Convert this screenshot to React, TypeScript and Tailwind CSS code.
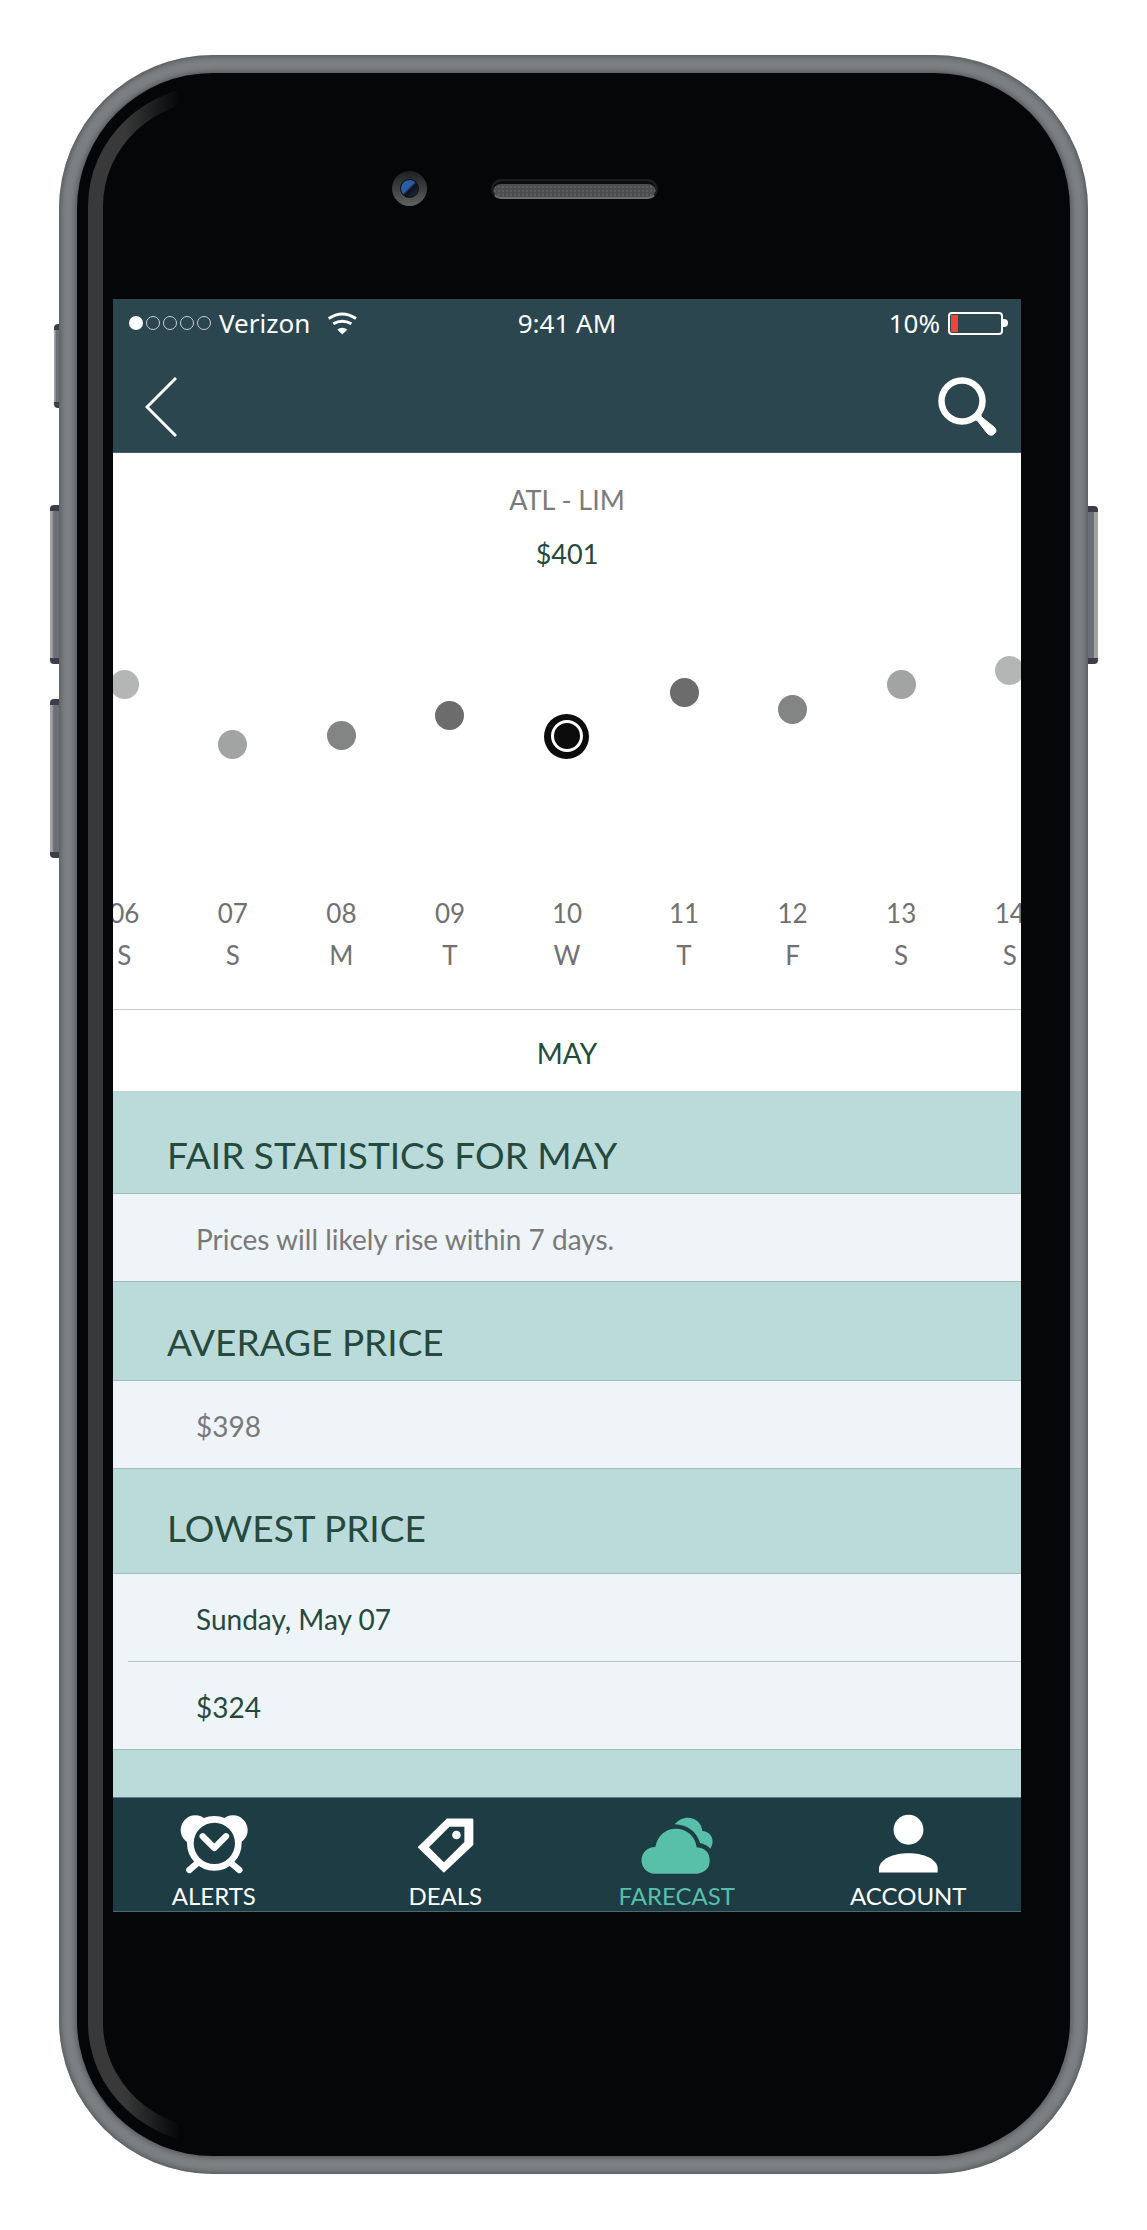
import type { ReactNode } from "react";

type Day = { date: string; day: string; top: number; tone: string };

const days: Day[] = [
  { date: "06", day: "S", top: 78, tone: "bg-[#b4b6b5]" },
  { date: "07", day: "S", top: 138, tone: "bg-[#a2a4a3]" },
  { date: "08", day: "M", top: 129, tone: "bg-[#838584]" },
  { date: "09", day: "T", top: 109, tone: "bg-[#6c6c6c]" },
  { date: "10", day: "W", top: 130, tone: "" },
  { date: "11", day: "T", top: 86, tone: "bg-[#6c6c6c]" },
  { date: "12", day: "F", top: 103, tone: "bg-[#838584]" },
  { date: "13", day: "S", top: 78, tone: "bg-[#a2a4a3]" },
  { date: "14", day: "S", top: 64, tone: "bg-[#b4b6b5]" },
];

function SideButton({ className, right = false }: { className: string; right?: boolean }) {
  return (
    <div
      className={`absolute border-y-[6px] border-y-[#3b3d49] ${
        right
          ? "rounded-r-[4px] bg-linear-to-l from-[#a3a1a1] from-35% to-[#6d6f78] to-40%"
          : "rounded-l-[4px] bg-linear-to-r from-[#a3a1a5] from-25% to-[#6d6f78] to-40%"
      } ${className}`}
    />
  );
}

function WifiIcon() {
  return (
    <svg viewBox="684 64 88 68" className="h-[23px] w-[29px]" fill="none" stroke="#fff" strokeWidth="9" aria-hidden="true">
      <path d="M686 83Q727 55 769 83" />
      <path d="M700 99Q727 83 755 99" />
      <path d="M712 116Q727 106 743 116L727 131Z" fill="#fff" stroke="none" />
    </svg>
  );
}

function StatusBar() {
  return (
    <div className="grid h-12 grid-cols-3 items-center pr-4 pl-4 font-['Noto_Sans','Open_Sans',sans-serif] text-[26px] leading-none text-white">
      <div className="flex items-center">
        <div className="flex gap-[3px]">
          <span className="size-[14px] rounded-full bg-white" />
          {[1, 2, 3, 4].map((n) => (
            <span key={n} className="size-[14px] rounded-full border border-[#c5d0d3]" />
          ))}
        </div>
        <span className="ml-2">Verizon</span>
        <span className="ml-[18px]">
          <WifiIcon />
        </span>
      </div>
      <span className="text-center whitespace-nowrap">9:41 AM</span>
      <div className="-mr-[3px] flex items-center justify-end">
        <span>10%</span>
        <div className="ml-2 h-[23px] w-[55px] rounded-[4px] border-2 border-white p-px">
          <div className="h-full w-[7px] bg-[#f0443a]" />
        </div>
        <div className="h-2 w-[5px] rounded-r-full bg-white" />
      </div>
    </div>
  );
}

function TitleBar() {
  return (
    <div className="flex h-[106px] items-end justify-between border-b border-[#3f5f6b] pr-[24px] pb-[15px] pl-[32px]">
      <button type="button" aria-label="Back">
        <svg viewBox="0 0 32 60" className="h-[60px] w-8" fill="none" stroke="#fff" strokeWidth="3" aria-hidden="true">
          <path d="M31 1L2 30L31 59" />
        </svg>
      </button>
      <button type="button" aria-label="Search">
        <svg viewBox="0 0 60 60" className="size-[60px]" aria-hidden="true">
          <circle cx="25" cy="24" r="20.500" fill="none" stroke="#fff" strokeWidth="6.500" />
          <path
            d="M37 42L43 36Q44 40 47 42L57 50Q61 54 57 57Q54 60 50 56L43 47Q41 43 37 42Z"
            fill="#fff"
            stroke="#fff"
            strokeWidth="1"
          />
        </svg>
      </button>
    </div>
  );
}

function FareChart() {
  return (
    <div className="overflow-hidden">
      <div className="-mx-[43px] grid grid-cols-[repeat(4,109fr)_126fr_repeat(4,109fr)]">
        {days.map((d) => (
          <button
            key={d.date}
            type="button"
            className="flex flex-col items-center text-[26px] leading-[42px] text-[#717171]"
          >
            <span className="relative block h-[300px] w-full">
              <span
                className="absolute left-1/2 flex size-[46px] -translate-x-1/2 -translate-y-1/2 items-center justify-center"
                style={{ top: d.top + 14 }}
              >
                {d.tone ? (
                  <span className={`size-[29px] rounded-full ${d.tone}`} />
                ) : (
                  <span className="flex size-[45px] items-center justify-center rounded-full bg-[#0c0c0c]">
                    <span className="size-8 rounded-full border-3 border-white" />
                  </span>
                )}
              </span>
            </span>
            <span>{d.date}</span>
            <span>{d.day}</span>
          </button>
        ))}
      </div>
    </div>
  );
}

function SectionTitle({ className, children }: { className: string; children: ReactNode }) {
  return (
    <h2
      className={`flex items-end border-b border-[#9fbcba] bg-[#bbdbda] pl-[54px] text-[37px] leading-[44px] text-[#26493e] ${className}`}
    >
      {children}
    </h2>
  );
}

function Row({ muted = false, last = true, children }: { muted?: boolean; last?: boolean; children: ReactNode }) {
  return (
    <div className="bg-[#eef4f7]">
      <p
        className={`flex h-[88px] items-center border-b pt-[3px] text-[28px] leading-[36px] ${
          last ? "border-[#9fbcba] pl-[83px]" : "ml-[15px] border-[#b5c5c6] pl-[68px]"
        } ${muted ? "text-[#797979]" : "text-[#26493e]"}`}
      >
        {children}
      </p>
    </div>
  );
}

function AlarmIcon() {
  return (
    <svg viewBox="243 100 204 180" className="h-[60px] w-[68px]" aria-hidden="true">
      <circle cx="289" cy="148" r="44" fill="currentColor" />
      <circle cx="402" cy="148" r="44" fill="currentColor" />
      <path d="M300 243L271 268M391 243L421 268" stroke="currentColor" strokeWidth="19" strokeLinecap="round" />
      <circle cx="346" cy="188" r="72" fill="#1e3c44" stroke="currentColor" strokeWidth="20" />
      <path d="M311 167L346 202L381 167" fill="none" stroke="currentColor" strokeWidth="19" strokeLinecap="round" strokeLinejoin="round" />
    </svg>
  );
}

function TagIcon() {
  return (
    <svg viewBox="946 100 172 180" className="h-[60px] w-[57px]" aria-hidden="true">
      <path
        d="M1036 113H1112Q1116 113 1116 117V193L1027 277L948 200ZM1044 138L982 200L1027 245L1089 184V138Z"
        fill="currentColor"
        fillRule="evenodd"
      />
      <circle cx="1065" cy="163" r="13" fill="currentColor" />
    </svg>
  );
}

function CloudIcon() {
  return (
    <svg viewBox="238 100 222 180" className="h-[60px] w-[74px]" fill="currentColor" aria-hidden="true">
      <path d="M281 279A40 40 0 0 1 284 199C290 166 313 144 345 144C378 144 404 166 408 200Q447 204 447 240Q447 272 410 279Z" />
      <path d="M342 131C370 96 422 110 425 151C451 153 465 179 449 204Q436 190 418 187C408 153 380 132 342 131Z" />
    </svg>
  );
}

function PersonIcon() {
  return (
    <svg viewBox="954 100 184 180" className="h-[60px] w-[61px]" fill="currentColor" aria-hidden="true">
      <circle cx="1046" cy="147" r="45" />
      <path d="M957 276V262C961 236 998 218 1046 218C1094 218 1131 236 1134 262V276Z" />
    </svg>
  );
}

const tabs = [
  { label: "ALERTS", icon: <AlarmIcon />, active: false },
  { label: "DEALS", icon: <TagIcon />, active: false },
  { label: "FARECAST", icon: <CloudIcon />, active: true },
  { label: "ACCOUNT", icon: <PersonIcon />, active: false },
];

function TabBar() {
  return (
    <nav className="overflow-hidden border-y border-t-[#5d8286] border-b-[#4a6970] bg-[#1e3c44]">
      <div className="-mr-[3px] -ml-[15px] grid h-[113px] grid-cols-4 pt-4">
        {tabs.map((t) => (
          <a
            key={t.label}
            href={`#${t.label.toLowerCase()}`}
            className={`flex flex-col items-center text-[24px] leading-[28px] ${t.active ? "text-[#58bfa9]" : "text-white"}`}
          >
            {t.icon}
            <span className="mt-2">{t.label}</span>
          </a>
        ))}
      </div>
    </nav>
  );
}

function Screen() {
  return (
    <main className="mr-[49px] ml-[36px] bg-white font-['Lato','Open_Sans',sans-serif]">
      <header className="bg-[#2b464e]">
        <StatusBar />
        <TitleBar />
      </header>
      <div className="pt-[20px] text-center text-[27px] leading-[54px]">
        <h1 className="text-[#7b7b7b]">ATL - LIM</h1>
        <p className="text-[#26493e]">$401</p>
      </div>
      <div className="pt-[11px] pb-[33px]">
        <FareChart />
      </div>
      <p className="border-t border-[#c6cccb] pt-[5px] text-center text-[28px] leading-[76px] text-[#26493e]">MAY</p>
      <SectionTitle className="h-[103px] pb-4">FAIR STATISTICS FOR MAY</SectionTitle>
      <Row muted>Prices will likely rise within 7 days.</Row>
      <SectionTitle className="h-[99px] pb-4">AVERAGE PRICE</SectionTitle>
      <Row muted>$398</Row>
      <SectionTitle className="h-[105px] pb-[23px]">LOWEST PRICE</SectionTitle>
      <Row last={false}>Sunday, May 07</Row>
      <Row>$324</Row>
      <div className="h-[47px] bg-[#bbdbda]" />
      <TabBar />
    </main>
  );
}

export default function App() {
  return (
    <div className="min-h-screen bg-white px-[59px] py-[55px]">
      <div className="relative rounded-[154px] bg-[#7d8184] p-[18px] shadow-[inset_0_0_6px_1px_#4a4e4e]">
        <SideButton className="top-[269px] -left-[5px] h-[84px] w-[5px]" />
        <SideButton className="top-[450px] -left-[9px] h-[159px] w-[9px]" />
        <SideButton className="top-[644px] -left-[9px] h-[159px] w-[9px]" />
        <SideButton right className="top-[451px] -right-[10px] h-[158px] w-[10px]" />
        <div className="relative rounded-[136px] bg-[#050608] pb-[244px] shadow-[0_0_6px_1px_#4a4e4e]">
          <div className="absolute inset-y-[11px] left-[11px] w-[92px] overflow-hidden mask-r-from-40% mask-r-to-100%">
            <div className="h-full w-[400px] rounded-[130px/122px] border-[15px] border-[#383938]" />
          </div>
          <div className="flex h-[226px] items-center pt-[5px]">
            <div className="ml-[315px] flex size-[35px] items-center justify-center rounded-full bg-linear-to-b from-[#1d2021] to-[#60625f]">
              <div className="size-[19px] rounded-full border border-[#0b0c10] bg-linear-to-br from-[#2c5ca3] from-45% via-[#0c1018] via-55% to-[#26334f]" />
            </div>
            <div className="ml-[64px] h-5 w-[167px] rounded-full border-2 border-[#1c1d1e] border-b-[#6d6e6e] bg-[#4c4d4f] bg-[radial-gradient(#5c5d5e_1px,transparent_1px)] bg-size-[4px_4px] shadow-[inset_0_3px_0_#0c0d0e]" />
          </div>
          <Screen />
        </div>
      </div>
    </div>
  );
}
